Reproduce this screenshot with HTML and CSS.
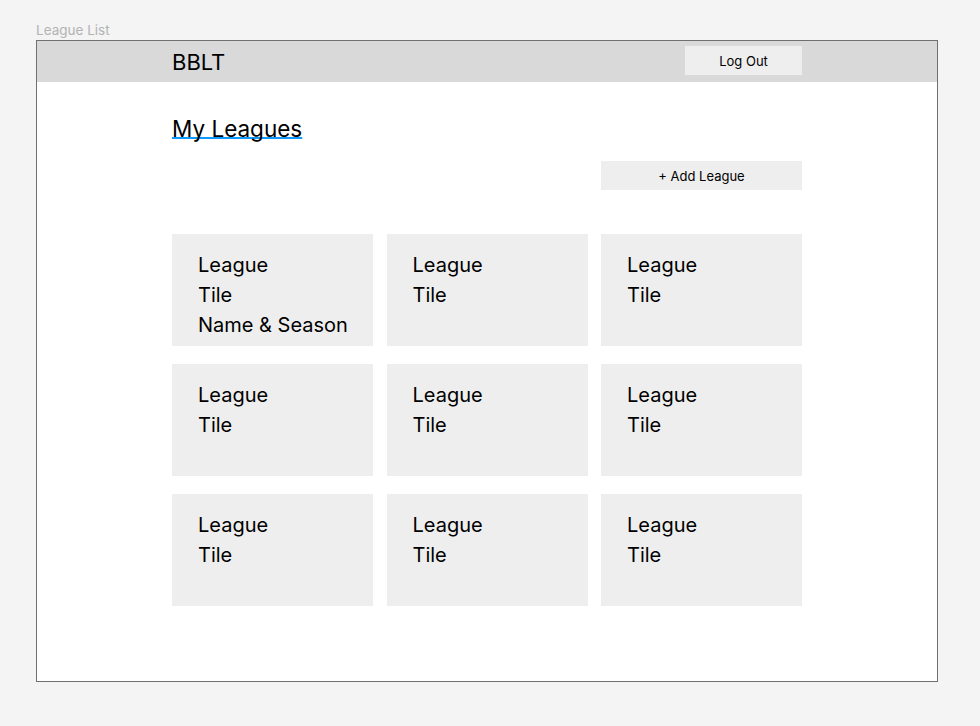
FILE: index.html
```html
<!DOCTYPE html>
<html>
<head>
<meta charset="utf-8">
<link rel="stylesheet" href="styles.css">
</head>
<body>
<div class="canvas">
  <div class="frame-label">League List</div>
  <div class="frame">
    <header class="topbar">
      <div class="inner bar-inner">
        <div class="brand">BBLT</div>
        <button class="btn logout">Log Out</button>
      </div>
    </header>
    <main class="inner content">
      <h1 class="title">My Leagues</h1>
      <div class="actions"><button class="btn add">+ Add League</button></div>
      <div class="grid">
        <div class="tile">League<br>Tile<br>Name &amp; Season</div>
        <div class="tile">League<br>Tile</div>
        <div class="tile">League<br>Tile</div>
        <div class="tile">League<br>Tile</div>
        <div class="tile">League<br>Tile</div>
        <div class="tile">League<br>Tile</div>
        <div class="tile">League<br>Tile</div>
        <div class="tile">League<br>Tile</div>
        <div class="tile">League<br>Tile</div>
      </div>
    </main>
  </div>
</div>
</body>
</html>
```

FILE: styles.css
```css
* { box-sizing: border-box; }
html, body {
  margin: 0;
  padding: 0;
  background: #f4f4f4;
  font-family: Inter, "Liberation Sans", sans-serif;
  color: #000;
}
.canvas {
  padding: 22px 0 0 36px;
  width: 980px;
  height: 726px;
}
.frame-label {
  font-size: 13.5px;
  line-height: 16px;
  color: #b3b3b3;
  height: 18px;
}
.frame {
  width: 902px;
  height: 642px;
  background: #fff;
  border: 1px solid #707070;
}
.inner {
  width: 630px;
  margin: 0 auto;
}
.topbar {
  background: #d9d9d9;
  height: 41px;
}
.bar-inner {
  display: flex;
  align-items: flex-start;
  justify-content: space-between;
  height: 41px;
}
.brand {
  font-size: 22px;
  line-height: 26px;
  padding-top: 8px;
}
.btn {
  border: none;
  background: #eeeeee;
  font-family: inherit;
  color: #000;
  font-size: 13px;
  padding: 0;
  margin: 0;
}
.logout {
  width: 117px;
  height: 29px;
  margin-top: 5px;
}
.content {
  padding-top: 33px;
}
.title {
  margin: 0;
  font-weight: 400;
  font-size: 22.5px;
  line-height: 28px;
  text-decoration: underline;
  text-decoration-color: #0d99ff;
  text-decoration-thickness: 2px;
  text-underline-offset: 0px;
  text-decoration-skip-ink: none;
  display: inline-block;
}
.actions {
  display: flex;
  justify-content: flex-end;
  margin-top: 18px;
}
.add {
  width: 201px;
  height: 29px;
}
.grid {
  margin-top: 44px;
  display: grid;
  grid-template-columns: repeat(3, 1fr);
  column-gap: 13.5px;
  row-gap: 18px;
  grid-auto-rows: 112px;
}
.tile {
  background: #eeeeee;
  padding: 16px 0 0 26px;
  font-size: 20px;
  line-height: 30px;
}
```
